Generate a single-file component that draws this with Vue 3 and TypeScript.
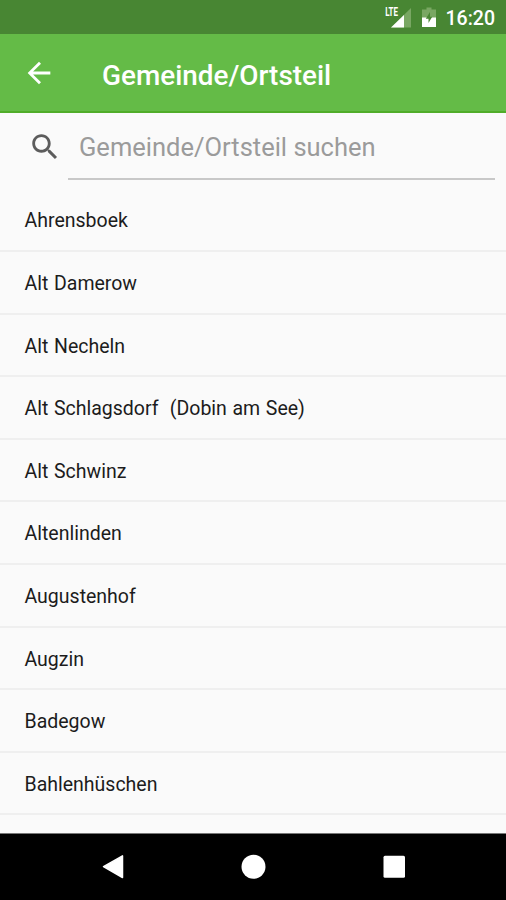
<script setup lang="ts">
import { ref } from 'vue'

const query = ref<string>('')
const places: string[] = [
  'Ahrensboek',
  'Alt Damerow',
  'Alt Necheln',
  'Alt Schlagsdorf  (Dobin am See)',
  'Alt Schwinz',
  'Altenlinden',
  'Augustenhof',
  'Augzin',
  'Badegow',
  'Bahlenhüschen',
]
</script>

<template>
  <div class="screen">
    <div class="status">
      <svg class="signal" width="28" height="24" viewBox="0 0 28 24">
        <path d="M26 3V22.5H6Z" fill="#79a763" />
        <path d="M19 10V22.5H6Z" fill="#fff" />
        <path d="M0 0H14V12H0Z" fill="#488633" />
        <text x="0.2" y="11" textLength="12.8" lengthAdjust="spacingAndGlyphs">LTE</text>
      </svg>
      <svg class="battery" width="14" height="21" viewBox="0 0 14 21">
        <path d="M4.5 0.5h5v2H14v17.5H0V2.5h4.5z" fill="#79a763" />
        <path d="M0 10.5H14V20H0Z" fill="#fff" />
        <path d="M8 5 3.8 11.8H6.5V16L10.2 9.7H8Z" fill="#488633" />
      </svg>
      <span class="clock">16:20</span>
    </div>

    <header class="toolbar">
      <button class="back" aria-label="Zurück">
        <svg width="34" height="34" viewBox="0 0 24 24">
          <path d="M20 11H7.83l5.59-5.59L12 4l-8 8 8 8 1.41-1.41L7.83 13H20v-2z" fill="#fff" />
        </svg>
      </button>
      <h1>Gemeinde/Ortsteil</h1>
    </header>

    <div class="search">
      <svg class="glass" width="34" height="34" viewBox="0 0 24 24">
        <path
          d="M15.5 14h-.79l-.28-.27C15.41 12.59 16 11.11 16 9.5 16 5.91 13.09 3 9.5 3S3 5.91 3 9.5 5.91 16 9.5 16c1.61 0 3.09-.59 4.23-1.57l.27.28v.79l5 4.99L20.49 19l-4.99-5zm-6 0C7.01 14 5 11.99 5 9.5S7.01 5 9.5 5 14 7.01 14 9.5 11.99 14 9.5 14z"
          fill="#5c5c5c"
        />
      </svg>
      <input v-model="query" type="text" placeholder="Gemeinde/Ortsteil suchen" />
    </div>

    <ul class="list">
      <li v-for="place in places" :key="place">{{ place }}</li>
    </ul>

    <nav class="navbar">
      <svg width="506" height="66" viewBox="0 0 506 66">
        <path d="M103.5 32.7 122.5 21.9V43.5Z" fill="#fff" stroke="#fff" stroke-width="1.5" stroke-linejoin="round" />
        <circle cx="253.5" cy="32.7" r="12" fill="#fff" />
        <rect x="383.5" y="21.7" width="21.5" height="22" rx="1.5" fill="#fff" />
      </svg>
    </nav>
  </div>
</template>

<style>
body {
  margin: 0;
}
</style>

<style scoped>
.screen {
  display: flex;
  flex-direction: column;
  box-sizing: border-box;
  width: 506px;
  height: 900px;
  overflow: hidden;
  background: #fafafa;
  font-family: Roboto, 'Liberation Sans', sans-serif;
}
.status {
  display: flex;
  flex: none;
  justify-content: flex-end;
  height: 34px;
  padding-right: 11px;
  background: #488633;
  color: #fff;
}
.signal {
  margin-top: 5px;
}
.signal text {
  fill: #fff;
  font-size: 12px;
  font-weight: 700;
}
.battery {
  margin: 7px 10px 0 9px;
}
.clock {
  font-size: 19.5px;
  font-weight: 500;
  line-height: 37px;
}
.toolbar {
  display: flex;
  flex: none;
  box-sizing: border-box;
  height: 79px;
  padding-left: 22px;
  border-bottom: 2px solid #50ad29;
  background: #64bb47;
}
.back {
  width: 34px;
  height: 34px;
  margin: 22px 46px 0 0;
  padding: 0;
  border: 0;
  background: none;
}
.back svg {
  display: block;
}
h1 {
  margin: 0;
  color: #fff;
  font-size: 27.9px;
  font-weight: 500;
  line-height: 83px;
}
.search {
  display: flex;
  flex: none;
  height: 76.4px;
  padding: 0 11px 0 28px;
}
.glass {
  flex: none;
  margin: 17px 6px 0 0;
}
input {
  flex: 1;
  box-sizing: border-box;
  min-width: 0;
  height: 67px;
  padding: 2px 0 0 11px;
  border: 0;
  border-bottom: 2px solid #c8c8c8;
  border-radius: 0;
  outline: 0;
  background: none;
  color: #222;
  font-family: inherit;
  font-size: 25.5px;
}
input::placeholder {
  color: #9b9b9b;
  opacity: 1;
}
.list {
  flex: 1;
  min-height: 0;
  margin: 0;
  padding: 0;
  overflow: hidden;
  list-style: none;
}
li {
  box-sizing: border-box;
  height: 62.6px;
  padding-left: 24.5px;
  border-bottom: 2px solid #efefef;
  color: #1c1c1c;
  font-size: 19.5px;
  line-height: 64px;
  white-space: pre;
  word-spacing: 0.8px;
}
.navbar {
  flex: none;
  height: 66px;
  border-top: 1px solid #777;
  background: #000;
}
.navbar svg {
  display: block;
}
</style>
